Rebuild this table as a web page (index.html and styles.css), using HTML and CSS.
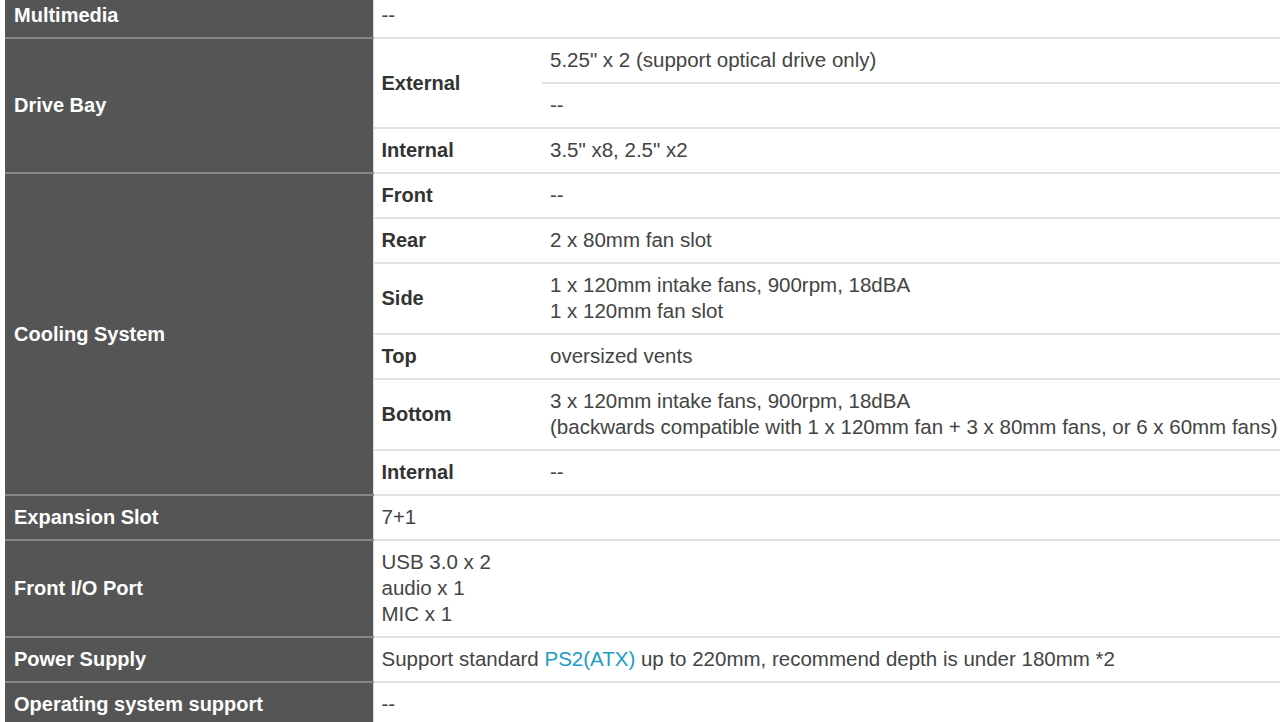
FILE: index.html
```html
<!DOCTYPE html>
<html lang="en">

<head>
    <meta charset="UTF-8">
    <meta name="viewport" content="width=device-width, initial-scale=1.0">
    <title>Specification</title>
    <link rel="stylesheet" href="styles.css">
</head>

<body>

    <!-- Spec Table -->
    <div class="spec-wrap">
        <table class="spec-table">
            <colgroup>
                <col class="col-head">
                <col class="col-sub">
                <col class="col-value">
            </colgroup>

            <tr>
                <th>Multimedia</th>
                <td class="value" colspan="2">--</td>
            </tr>

            <!-- Drive Bay -->
            <tr>
                <th rowspan="3">Drive Bay</th>
                <td class="sub" rowspan="2">External</td>
                <td class="value inner">5.25" x 2 (support optical drive only)</td>
            </tr>
            <tr>
                <td class="value">--</td>
            </tr>
            <tr>
                <td class="sub">Internal</td>
                <td class="value">3.5" x8, 2.5" x2</td>
            </tr>

            <!-- Cooling System -->
            <tr>
                <th rowspan="6">Cooling System</th>
                <td class="sub">Front</td>
                <td class="value">--</td>
            </tr>
            <tr>
                <td class="sub">Rear</td>
                <td class="value">2 x 80mm fan slot</td>
            </tr>
            <tr>
                <td class="sub">Side</td>
                <td class="value">1 x 120mm intake fans, 900rpm, 18dBA<br>1 x 120mm fan slot</td>
            </tr>
            <tr>
                <td class="sub">Top</td>
                <td class="value">oversized vents</td>
            </tr>
            <tr>
                <td class="sub">Bottom</td>
                <td class="value">3 x 120mm intake fans, 900rpm, 18dBA<br>(backwards compatible with 1 x 120mm fan + 3 x 80mm fans, or 6 x 60mm fans)</td>
            </tr>
            <tr>
                <td class="sub">Internal</td>
                <td class="value">--</td>
            </tr>

            <tr>
                <th>Expansion Slot</th>
                <td class="value" colspan="2">7+1</td>
            </tr>
            <tr>
                <th>Front I/O Port</th>
                <td class="value" colspan="2">USB 3.0 x 2<br>audio x 1<br>MIC x 1</td>
            </tr>
            <tr>
                <th>Power Supply</th>
                <td class="value" colspan="2">Support standard <a href="#">PS2(ATX)</a> up to 220mm, recommend depth is under 180mm *2</td>
            </tr>
            <tr>
                <th>Operating system support</th>
                <td class="value" colspan="2">--</td>
            </tr>
        </table>
    </div>

</body>

</html>
```

FILE: styles.css
```css
/* Reset default margin and padding */
* {
    margin: 0;
    padding: 0;
    box-sizing: border-box;
}

body {
    background-color: white;
    font-family: "Liberation Sans", Arial, sans-serif;
    font-size: 20px;
    color: #444;
    overflow: hidden;
}

/* Page is scrolled a little, so the first row is cut at the top */
.spec-wrap {
    margin-top: -6px;
    padding-left: 5px;
}

.spec-table {
    width: 1300px;
    border-collapse: collapse;
    table-layout: fixed;
    line-height: 26px;
}

.col-head {
    width: 368px;
}

.col-sub {
    width: 169px;
}

/* Dark heading column */
.spec-table th {
    background-color: #555;
    color: white;
    font-weight: bold;
    text-align: left;
    padding: 8px 8px 9px 9px;
    border-bottom: 2px solid #878787;
    border-right: 1px solid #ddd;
    vertical-align: middle;
}

/* Sub heading cells (External, Front ...) */
.spec-table td {
    padding: 8px 8px 9px 8px;
    border-bottom: 2px solid #e1e1e1;
    vertical-align: middle;
}

.spec-table .sub {
    color: #333;
    font-weight: bold;
}

.spec-table .value {
    color: #444;
    font-size: 20.5px;
}

/* Link colour */
.spec-table a {
    color: #1d9cc4;
    text-decoration: none;
}
```
